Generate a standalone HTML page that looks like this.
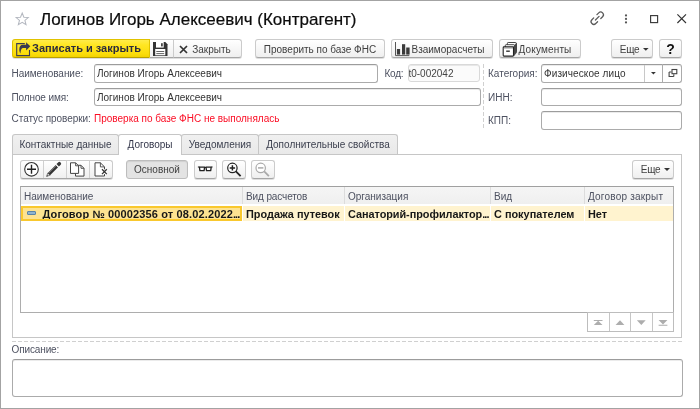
<!DOCTYPE html>
<html lang="ru">
<head>
<meta charset="utf-8">
<title>Логинов Игорь Алексеевич (Контрагент)</title>
<style>
*{box-sizing:border-box;margin:0;padding:0}
html,body{width:700px;height:409px;overflow:hidden;background:#fff}
body{font-family:"Liberation Sans",sans-serif;font-size:10px;color:#333;position:relative}
.frame{position:absolute;left:0;top:0;width:700px;height:409px;border:1px solid #a3a3a3}
.abs{position:absolute;white-space:nowrap}
.title{left:40px;top:8px;font-size:17px;color:#0c0c0c;-webkit-text-stroke:0.2px #0c0c0c;line-height:24px;letter-spacing:0px}
.btn{position:absolute;height:19px;border:1px solid #cbcbcb;border-bottom-color:#a6a6a6;border-radius:3px;background:linear-gradient(#ffffff,#efefef);box-shadow:0 1px 0 rgba(0,0,0,0.13);font-size:10px;line-height:19px;color:#404040;text-align:center;white-space:nowrap}
.btn.y{background:linear-gradient(#ffec4a 0%,#ffe622 30%,#fbdd0c 80%,#f3d300 100%);border-color:#e0c200;border-bottom-color:#b8a000;border-radius:3px 0 0 3px;color:#2b2b3d;font-weight:bold;font-size:11px;line-height:17px}
.lbl{position:absolute;font-size:10px;line-height:14px;color:#4d5160;white-space:nowrap}
.inp{position:absolute;height:19px;border:1px solid #ababab;border-top-color:#9c9c9c;box-shadow:inset 0 1px 0 rgba(0,0,0,0.08);border-radius:3px;background:#fff;font-size:10px;line-height:18px;color:#333;padding-left:2px;white-space:nowrap;overflow:hidden}
.tab{position:absolute;top:134px;height:20px;border:1px solid #c6c6c6;border-bottom:none;border-radius:3px 3px 0 0;background:linear-gradient(#f0f0f0,#e9e9e9);font-size:10px;line-height:19px;color:#3b3f4e;text-align:center;white-space:nowrap}
.tab.a{background:#fff;height:21px;z-index:2;color:#33364a}
.panel{position:absolute;left:12px;top:154px;width:670px;height:184px;border:1px solid #c6c6c6;background:#fff}
.tbl{position:absolute;left:20px;top:186px;width:654px;height:127px;border:1px solid #adadad;border-top-color:#a0a0a0;background:#fff}
.th{position:absolute;top:187px;height:17px;background:linear-gradient(#f5f5f5,#efefef);border-right:1px solid #dcdcdc;font-size:10px;line-height:19px;color:#4d5160;padding-left:3px;white-space:nowrap;overflow:hidden}
.td{position:absolute;top:206px;height:15px;background:#fff3cf;font-size:10.9px;font-weight:bold;line-height:16px;color:#171717;padding-left:3px;white-space:nowrap;overflow:hidden;border-right:1px solid #fff}
.hdash{position:absolute;left:12px;top:341px;width:670px;height:1px;background:repeating-linear-gradient(90deg,#d0d0d0 0 4px,transparent 4px 6px)}
.vdash{position:absolute;left:483px;top:64px;height:64px;width:1px;background:repeating-linear-gradient(180deg,#d0d0d0 0 4px,transparent 4px 6px)}
svg{position:absolute;overflow:visible}
</style>
</head>
<body>
<div id="root" style="position:absolute;left:0;top:0;width:700px;height:409px;will-change:transform">
<div class="frame"></div>

<!-- title bar -->
<svg style="left:15.2px;top:12.1px" width="14.4" height="13.8" viewBox="0 0 18 17"><path d="M9 1.2 L11.1 6.4 L16.6 6.8 L12.4 10.4 L13.8 15.8 L9 12.8 L4.2 15.8 L5.6 10.4 L1.4 6.8 L6.9 6.4 Z" fill="none" stroke="#b4b8c0" stroke-width="1.3" stroke-linejoin="miter"/></svg>
<div class="abs title">Логинов Игорь Алексеевич (Контрагент)</div>

<!-- link icon -->
<svg style="left:0;top:0" width="700" height="409" viewBox="0 0 700 409"><g transform="translate(597.25,18.2) rotate(-45) scale(0.91)" fill="none" stroke="#5a5a5a" stroke-width="1.4" stroke-linecap="round"><path d="M2.5 -3 H5.3 A3 3 0 0 1 5.3 3 H2.5"/><path d="M-2.5 3 H-5.3 A3 3 0 0 1 -5.3 -3 H-2.5"/><path d="M-2.8 0 H2.8"/></g></svg>
<!-- dots -->
<svg style="left:623.8px;top:13px" width="4" height="12" viewBox="0 0 4 12"><circle cx="2" cy="2.4" r="1.1" fill="#555"/><circle cx="2" cy="5.9" r="1.1" fill="#555"/><circle cx="2" cy="9.4" r="1.1" fill="#555"/></svg>
<!-- maximize -->
<svg style="left:650px;top:15px" width="9" height="9" viewBox="0 0 9 9"><rect x="0.6" y="0.6" width="7" height="7" fill="none" stroke="#3a3a3a" stroke-width="1.15"/></svg>
<!-- close -->
<svg style="left:676.8px;top:14.2px" width="10" height="10" viewBox="0 0 10 10"><path d="M0.4 0.4 L9 9 M9 0.4 L0.4 9" stroke="#333" stroke-width="1.15" fill="none"/></svg>

<!-- toolbar -->
<div class="btn y" style="left:12px;top:39px;width:138px;padding-left:11px">Записать и закрыть</div>
<svg style="left:16px;top:42px" width="15" height="14" viewBox="0 0 15 14"><path d="M8.8 1.6 H0.7 V13.6 H13.5 V8" fill="none" stroke="#3c3c52" stroke-width="1.1"/><path d="M10.1 0.3 L14.3 4.3 L10.1 8.6 V5.9 H6.9 C5.2 6 4.7 8.6 4.4 11.6 C3.6 10.4 3.3 9 3.3 7.6 C3.3 4.8 4.6 2.8 6.8 2.8 H10.1 Z" fill="#3a3a50"/></svg>

<div class="btn" style="left:150px;top:39px;width:24px;border-radius:0;border-left:none"></div>
<svg style="left:153.3px;top:42.1px" width="14.5" height="14" viewBox="0 0 14.5 14"><path d="M0 0 H12.3 L14.5 2.2 V14 H0 Z" fill="#333"/><rect x="3" y="0" width="7.7" height="5.6" fill="#fff"/><rect x="8.1" y="1.2" width="1.6" height="3.2" fill="#333"/><rect x="2.2" y="7" width="10.1" height="6.3" fill="#fff"/><rect x="3.3" y="9" width="7.9" height="1" fill="#666"/><rect x="3.3" y="11.1" width="7.9" height="1" fill="#666"/></svg>

<div class="btn" style="left:174px;top:39px;width:68px;padding-left:8px;border-left:none;border-radius:0 3px 3px 0">Закрыть</div>
<svg style="left:179.3px;top:44.6px" width="9" height="9" viewBox="0 0 9 9"><path d="M1 1 L8 8 M8 1 L1 8" stroke="#333" stroke-width="1.7" fill="none"/></svg>

<div class="btn" style="left:255px;top:39px;width:130px">Проверить по базе ФНС</div>

<div class="btn" style="left:391px;top:39px;width:102px;padding-left:12px">Взаиморасчеты</div>
<svg style="left:395px;top:42px" width="15" height="15" viewBox="0 0 15 15"><path d="M0.5 0 V13.6 H14.3" stroke="#555" stroke-width="1" fill="none"/><rect x="1.9" y="7" width="3.2" height="5.6" fill="#3a3a3a"/><rect x="7" y="2.2" width="3.2" height="10.4" fill="#3a3a3a"/><rect x="11.2" y="5.5" width="3.4" height="7.1" fill="#3a3a3a"/></svg>

<div class="btn" style="left:499px;top:39px;width:82px;padding-left:10px;letter-spacing:0.15px">Документы</div>
<svg style="left:0;top:0" width="700" height="409" viewBox="0 0 700 409"><rect x="507.4" y="42.5" width="8.9" height="9.5" rx="0.8" fill="#fff" stroke="#333" stroke-width="0.9"/><rect x="505.3" y="44.7" width="9.4" height="9.5" rx="0.8" fill="#fff" stroke="#333" stroke-width="0.9"/><path d="M513.6 47 L516.4 43.4 V52.6 L513.6 56.1 Z" fill="#4a4a4a" stroke="#3a3a3a" stroke-width="0.7" stroke-linejoin="round"/><rect x="503.2" y="46.9" width="10.3" height="9.2" rx="0.8" fill="#fff" stroke="#222" stroke-width="1.1"/><path d="M503.8 48.3 H513" stroke="#aaa" stroke-width="0.8"/><rect x="506.2" y="50.5" width="3.6" height="1.4" fill="#333"/></svg>

<div class="btn" style="left:611px;top:39px;width:42px;padding-right:5px;letter-spacing:-0.3px">Еще</div>
<svg style="left:643.2px;top:48.2px" width="5.6" height="2.8" viewBox="0 0 6 3"><path d="M0 0 H6 L3 3 Z" fill="#333"/></svg>
<div class="btn" style="left:659px;top:39px;width:23px;font-weight:bold;font-size:14px;line-height:19px;color:#111">?</div>

<!-- form -->
<div class="lbl" style="left:11.5px;top:67px;letter-spacing:-0.03px">Наименование:</div>
<div class="inp" style="left:94px;top:64px;width:284px">Логинов Игорь Алексеевич</div>
<div class="lbl" style="left:384.5px;top:67px;letter-spacing:-0.25px">Код:</div>
<div class="inp" style="left:408px;top:64px;width:72px;height:18px;line-height:17px;background:#fbfbfb;border-color:#d9d9d9;padding-left:0;text-indent:-0.6px;color:#444">t0-002042</div>
<div class="vdash"></div>
<div class="lbl" style="left:488px;top:67px">Категория:</div>
<div class="inp" style="left:541px;top:64px;width:122px;border-radius:3px 0 0 3px;letter-spacing:0.1px">Физическое лицо</div>
<div class="abs" style="left:644px;top:65px;width:1px;height:17px;background:#c8c8c8"></div>
<svg style="left:650.5px;top:71.9px" width="4.8" height="2.4" viewBox="0 0 6 3"><path d="M0 0 H6 L3 3 Z" fill="#333"/></svg>
<div class="inp" style="left:662px;top:64px;width:20px;padding:0;border-radius:0 3px 3px 0"></div>
<svg style="left:0;top:0" width="700" height="409" viewBox="0 0 700 409"><rect x="672" y="69.5" width="4.8" height="4.2" fill="#fff" stroke="#444" stroke-width="1.1"/><path d="M669.1 72 V76.5 H673.8" fill="none" stroke="#444" stroke-width="1.1"/><path d="M669.1 72 H671.4 M673.8 76.5 V74.3" fill="none" stroke="#444" stroke-width="1.1"/></svg>

<div class="lbl" style="left:11.4px;top:91px;letter-spacing:-0.1px">Полное имя:</div>
<div class="inp" style="left:94px;top:88px;width:387px;height:18px;line-height:17px">Логинов Игорь Алексеевич</div>
<div class="lbl" style="left:488px;top:91px">ИНН:</div>
<div class="inp" style="left:541px;top:88px;width:141px;height:18px"></div>

<div class="lbl" style="left:11.6px;top:112px;letter-spacing:-0.05px">Статус проверки:</div>
<div class="lbl" style="left:94px;top:112px;color:#fb0d24">Проверка по базе ФНС не выполнялась</div>
<div class="lbl" style="left:488px;top:114px">КПП:</div>
<div class="inp" style="left:541px;top:111px;width:141px"></div>

<!-- tabs -->
<div class="panel"></div>
<div class="tab" style="left:12px;width:107px">Контактные данные</div>
<div class="tab a" style="left:118px;width:64px">Договоры</div>
<div class="tab" style="left:181px;width:78px">Уведомления</div>
<div class="tab" style="left:258px;width:140px">Дополнительные свойства</div>

<!-- tab toolbar -->
<div class="btn" style="left:20px;top:160px;width:93px;height:19px"></div>
<div class="abs" style="left:43px;top:161px;width:1px;height:17px;background:#d0d0d0"></div>
<div class="abs" style="left:66px;top:161px;width:1px;height:17px;background:#d0d0d0"></div>
<div class="abs" style="left:89px;top:161px;width:1px;height:17px;background:#d0d0d0"></div>

<svg id="ticons" style="left:0;top:0" width="700" height="409" viewBox="0 0 700 409">
<circle cx="31.5" cy="169.3" r="6.8" fill="#fff" stroke="#333" stroke-width="1.1"/><path d="M27 169.3 H36 M31.5 164.8 V173.8" stroke="#222" stroke-width="1.4" fill="none"/>
<g transform="translate(46.6,176.4) rotate(-45)"><path d="M0 0 L3.3 -1.6 V1.6 Z" fill="#d8d8d8" stroke="#444" stroke-width="0.6" stroke-linejoin="round"/><path d="M0 0 L1.3 -0.65 V0.65 Z" fill="#333"/><rect x="3.3" y="-1.6" width="11.3" height="3.2" fill="#333"/><path d="M4 -0.75 H14.2" stroke="#d0d0d0" stroke-width="0.7" stroke-dasharray="0.75 0.75" fill="none"/><rect x="14.6" y="-1.6" width="1.1" height="3.2" fill="#f4f4f4"/><path d="M15.7 -1.7 H18.3 Q19.8 -1.7 19.8 0 Q19.8 1.7 18.3 1.7 H15.7 Z" fill="#3a3a3a"/></g>
<path d="M75.5 165.3 H81 L84 168.3 V176.1 H75.5 Z" fill="#fff" stroke="#444" stroke-width="1"/><path d="M81 165.3 V168.3 H84" fill="none" stroke="#444" stroke-width="0.9"/>
<path d="M70.5 162.8 H75.6 L78.6 165.8 V173.4 H70.5 Z" fill="#fff" stroke="#444" stroke-width="1"/><path d="M75.6 162.8 V165.8 H78.6" fill="none" stroke="#444" stroke-width="0.9"/>
<path d="M95 162.8 H100.4 L104.5 166.9 V176 H95 Z" fill="#fff" stroke="#444" stroke-width="1"/><path d="M100.4 162.8 V166.9 H104.5" fill="none" stroke="#444" stroke-width="0.9"/>
<path d="M102 169.3 L106.8 174.1 M106.8 169.3 L102 174.1" stroke="#fff" stroke-width="3" fill="none"/><path d="M102 169.3 L106.8 174.1 M106.8 169.3 L102 174.1" stroke="#333" stroke-width="1.3" fill="none"/>
</svg>
<div class="btn" style="left:126px;top:160px;width:62px;height:19px;background:#e3e3e3;border-color:#bdbdbd;box-shadow:inset 0 1px 1px #cfcfcf;line-height:17px">Основной</div>

<div class="btn" style="left:194px;top:160px;width:23px;height:19px"></div>

<div class="btn" style="left:222px;top:160px;width:24px;height:19px"></div>

<div class="btn" style="left:251px;top:160px;width:24px;height:19px"></div>

<svg id="ticons2" style="left:0;top:0" width="700" height="409" viewBox="0 0 700 409">
<g fill="#fff" stroke="#222" stroke-width="1.3" stroke-linejoin="round"><path d="M199.4 167.1 H204.6 L204.1 170.6 H199.9 Z"/><path d="M206 167.1 H211.2 L210.7 170.6 H206.5 Z"/></g><path d="M197.9 167 H199.4 M204.6 167.5 H206 M211.2 167 H212.6" stroke="#222" stroke-width="1.2" fill="none"/>
<circle cx="232.4" cy="167.9" r="4.7" fill="#fff" stroke="#222" stroke-width="1.2"/><path d="M229.7 167.9 H235.1 M232.4 165.2 V170.6" stroke="#222" stroke-width="1.5" fill="none"/><path d="M235.9 171.4 L240.6 176.1" stroke="#222" stroke-width="1.8" fill="none"/>
<circle cx="260.7" cy="167.9" r="4.7" fill="#fff" stroke="#a9a9a9" stroke-width="1.2"/><path d="M258 167.9 H263.4" stroke="#a9a9a9" stroke-width="1.5" fill="none"/><path d="M264.2 171.4 L268.9 176.1" stroke="#a9a9a9" stroke-width="1.8" fill="none"/>
</svg>
<div class="btn" style="left:632px;top:160px;width:42px;height:19px;padding-right:5px;line-height:17px;letter-spacing:-0.3px">Еще</div>
<svg style="left:664px;top:168px" width="6" height="3" viewBox="0 0 6 3"><path d="M0 0 H6 L3 3 Z" fill="#333"/></svg>

<!-- table -->
<div class="tbl"></div>
<div class="th" style="left:21px;width:222px">Наименование</div>
<div class="th" style="left:243px;width:102px;letter-spacing:-0.12px">Вид расчетов</div>
<div class="th" style="left:345px;width:146px">Организация</div>
<div class="th" style="left:491px;width:94px">Вид</div>
<div class="th" style="left:585px;width:88px;border-right:none;letter-spacing:0.2px">Договор закрыт</div>

<div class="td" style="left:21px;width:221px;background:#fde391;border:2px solid #f9c82e;line-height:12px;padding-left:19.5px;font-size:11px;letter-spacing:0.13px">Договор № 00002356 от 08.02.2022<span style="letter-spacing:-0.9px">...</span></div>
<div class="abs" style="left:27px;top:210.5px;width:9px;height:4px;background:#8fb4d0;border:1px solid #5a84a6;border-radius:1px"></div>
<div class="td" style="left:243px;width:102px">Продажа путевок</div>
<div class="td" style="left:345px;width:146px;letter-spacing:-0.05px">Санаторий-профилактор<span style="letter-spacing:-0.9px">...</span></div>
<div class="td" style="left:491px;width:94px">С покупателем</div>
<div class="td" style="left:585px;width:88px;border-right:none">Нет</div>

<!-- nav buttons -->
<div class="abs" style="left:587px;top:312px;width:87px;height:20px;border:1px solid #bdbdbd;background:#fff"></div>
<div class="abs" style="left:609px;top:313px;width:1px;height:18px;background:#c6c6c6"></div>
<div class="abs" style="left:630px;top:313px;width:1px;height:18px;background:#c6c6c6"></div>
<div class="abs" style="left:652px;top:313px;width:1px;height:18px;background:#c6c6c6"></div>
<svg style="left:0;top:0" width="700" height="409" viewBox="0 0 700 409"><g fill="#adadad"><path d="M593.8 319.9 H602.5 V320.9 H593.8 Z M598.15 320.7 L602.5 325 H593.8 Z"/><path d="M620 320.2 L624.4 324.9 H615.6 Z"/><path d="M636.9 320.3 H645.7 L641.3 325 Z"/><path d="M658.6 319.9 H667.4 L663 324.4 Z M658.6 324.8 H667.4 V325.8 H658.6 Z"/></g></svg>




<div class="hdash"></div>
<div class="lbl" style="left:11.5px;top:343.4px;letter-spacing:-0.12px">Описание:</div>
<div class="inp" style="left:12px;top:359px;width:671px;height:38px"></div>

</div>
</body>
</html>
